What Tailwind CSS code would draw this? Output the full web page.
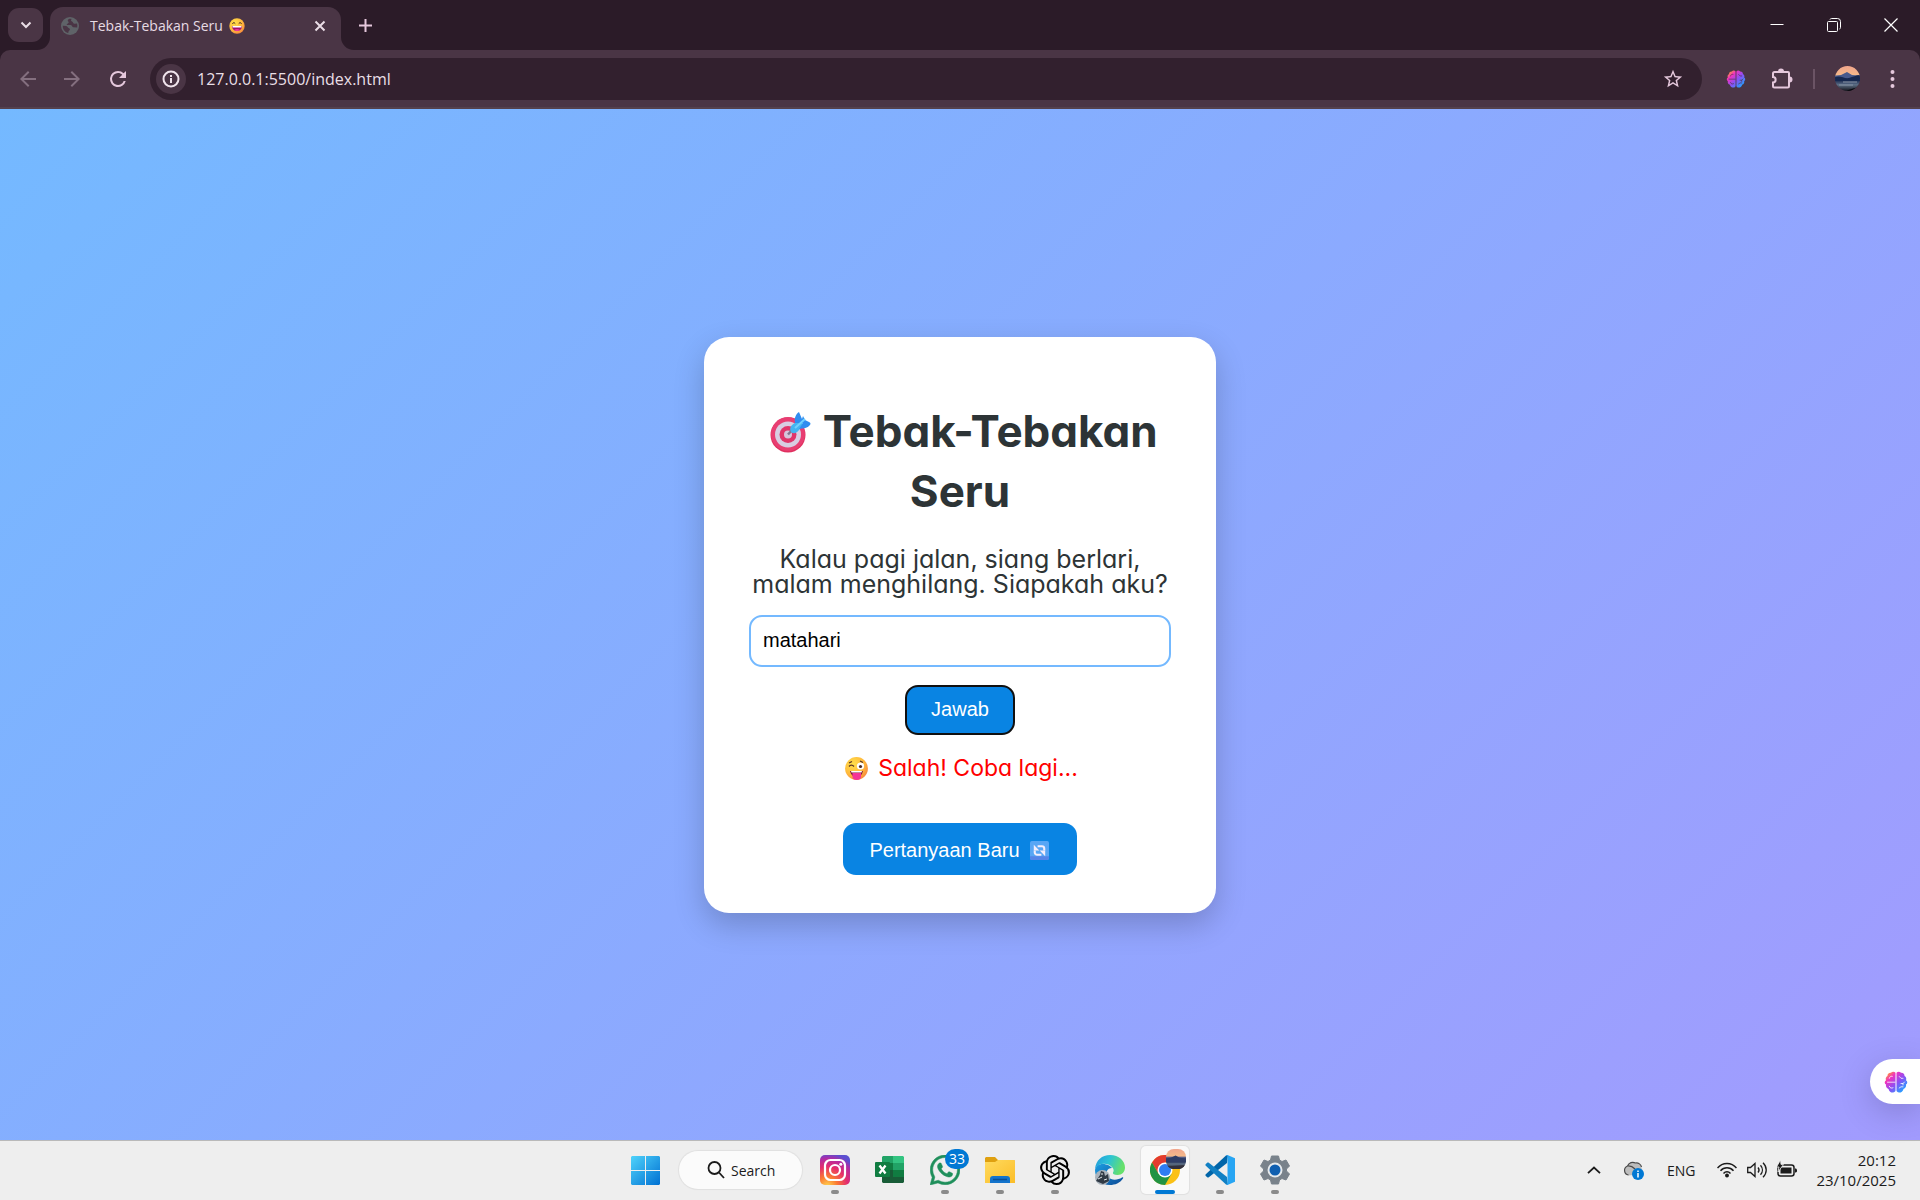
<!DOCTYPE html>
<html lang="id">
<head>
<meta charset="utf-8">
<meta name="viewport" content="width=device-width, initial-scale=1">
<title>Tebak-Tebakan Seru</title>
<script src="https://cdn.jsdelivr.net/npm/@tailwindcss/browser@4"></script>
</head>
<body class="flex min-h-screen flex-col bg-[#eeeeee] font-['Open_Sans','Noto_Sans',sans-serif]">

<!-- Shared gradients and symbols -->
<svg class="absolute size-0" aria-hidden="true">
  <defs>
    <linearGradient id="brainGrad" x1="0" y1="0" x2="1" y2="1">
      <stop offset=".08" stop-color="#ffa02a"/><stop offset=".28" stop-color="#f032c0"/><stop offset=".55" stop-color="#8a50f5"/><stop offset=".85" stop-color="#2b9cff"/>
    </linearGradient>
    <radialGradient id="face" cx=".35" cy=".3" r=".8">
      <stop offset="0" stop-color="#ffe04a"/><stop offset=".6" stop-color="#ffb93c"/><stop offset="1" stop-color="#f5803e"/>
    </radialGradient>
    <linearGradient id="sky" x1="0" y1="0" x2="0" y2="1">
      <stop offset="0" stop-color="#f0a58c"/><stop offset=".35" stop-color="#f5b98a"/><stop offset=".42" stop-color="#56608a"/><stop offset=".58" stop-color="#1d2c52"/><stop offset=".75" stop-color="#5d6f86"/><stop offset="1" stop-color="#12131a"/>
    </linearGradient>
    <symbol id="brain" viewBox="0 0 24 22">
      <path d="M11.500 1.800C10.600.500 8.200.300 7 1.700 4.800 1.500 3.200 3.300 3.500 5 1.800 5.900 1.300 7.800 2 9.200.300 10.200.300 12.700 2 13.600 1.500 15.600 2.700 17.500 4.500 17.900 5 20.400 7 21.600 9 21.500 10.300 21.400 11.500 20.600 11.500 19.500ZM12.500 1.800C13.400.500 15.800.300 17 1.700 19.200 1.500 20.800 3.300 20.500 5 22.200 5.900 22.700 7.800 22 9.200 23.700 10.200 23.700 12.700 22 13.600 22.500 15.600 21.300 17.500 19.500 17.900 19 20.400 17 21.600 15 21.500 13.700 21.400 12.500 20.600 12.500 19.500Z" fill="url(#brainGrad)"/>
      <path d="M3.500 11.200H11M5.300 7.300C5.500 5.700 7 5 8.300 5.300M5.300 15.300C6 17.200 7.600 17.500 9 16.800M15.300 5.500 17 7.300H19M17 12.500H19L20.500 11M19 12.500V14M15.200 17 17 15.800H19" fill="none" stroke="currentColor" stroke-width=".8" stroke-linecap="round"/>
    </symbol>
  </defs>
</svg>

<!-- Browser chrome -->
<header class="bg-[#2b1b28] text-[#e7dbe4]">
  <div class="flex h-[50px] items-end">
    <button type="button" aria-label="Cari tab" class="mb-2 ml-2 grid h-[34px] w-[35px] place-items-center rounded-[11px] bg-[#4a3545]">
      <svg class="size-[12px]" viewBox="0 0 12 12" fill="none" stroke="#eadde6" stroke-width="2"><path d="M1.500 3.500 6 8 10.500 3.500"/></svg>
    </button>
    <div class="relative ml-[7px] flex h-[43px] w-[291px] items-center rounded-t-[13px] bg-[#4a3545] pr-[15px] pb-[6px] pl-[11px]">
      <svg class="absolute bottom-0 -left-[13px] size-[13px]" viewBox="0 0 13 13"><path d="M13 0V13H0A13 13 0 0 0 13 0Z" fill="#4a3545"/></svg>
      <svg class="absolute -right-[13px] bottom-0 size-[13px]" viewBox="0 0 13 13"><path d="M0 0V13H13A13 13 0 0 1 0 0Z" fill="#4a3545"/></svg>
      <svg class="size-[18px]" viewBox="0 0 18 18"><circle cx="9" cy="9" r="9" fill="#5f6368"/><path d="M9.500 1.700C7 1.800 6 3.500 7.500 4.700 8.500 5.600 6.200 6.500 5.600 8H9.500C11 8 11 10 12.200 10.300L16.200 10.500A7.400 7.400 0 0 0 16 6.600L13.500 6.700C12 6.700 12.200 4.800 11 4.500 10 4.200 9.300 2.600 11 2ZM1.700 8.800 5.200 9C7 9.300 6.600 11 8 11.300 9.500 11.700 9 13.200 8.300 13.500 7 14.200 8 15.500 7 16A7.400 7.400 0 0 1 1.700 8.800Z" fill="#4a3545"/></svg>
      <span class="ml-[11px] text-[14px] leading-5 whitespace-nowrap">Tebak-Tebakan Seru</span>
      <svg class="ml-[6px] size-4" viewBox="0 0 16 16"><circle cx="8" cy="8" r="7.700" fill="url(#face)"/><path d="M3.300 5.700 5 4.500 6.300 5.700M9.700 5.700 11 4.500 12.700 5.700" fill="none" stroke="#4a2b25" stroke-width="1"/><path d="M3 8H13C13 14.600 3 14.600 3 8Z" fill="#a3126b"/><path d="M3.500 8H12.500V9.500H3.500Z" fill="#fff"/><path d="M5 12C6.500 10.800 9.500 10.800 11 12 9.500 13.500 6.500 13.500 5 12Z" fill="#f0359a"/></svg>
      <button type="button" aria-label="Tutup tab" class="ml-auto"><svg class="size-3" viewBox="0 0 12 12" stroke="#eadde6" stroke-width="2"><path d="M1.500 1.500 10.500 10.500M10.500 1.500 1.500 10.500"/></svg></button>
    </div>
    <button type="button" aria-label="Tab baru" class="mb-[18px] ml-[18px]"><svg class="size-[13px]" viewBox="0 0 13 13" stroke="#e5c8dc" stroke-width="2"><path d="M6.500 0V13M0 6.500H13"/></svg></button>
    <div class="mr-[22px] mb-[18px] ml-auto flex items-center gap-[43px] text-white">
      <button type="button" aria-label="Kecilkan"><svg class="size-[14px]" viewBox="0 0 14 14" stroke="currentColor"><path d="M.500 6.500H13.500"/></svg></button>
      <button type="button" aria-label="Pulihkan"><svg class="size-[14px]" viewBox="0 0 14 14" fill="none" stroke="currentColor"><rect x=".5" y="3.500" width="10" height="10" rx="1"/><path d="M3 1.500C3.300.800 3.800.500 4.500.500H10.500A3 3 0 0 1 13.500 3.500V9.500C13.500 10.300 13.200 10.800 12.500 11"/></svg></button>
      <button type="button" aria-label="Tutup"><svg class="size-[14px]" viewBox="0 0 14 14" stroke="currentColor" stroke-width="1.200"><path d="M.500.500 13.500 13.500M13.500.500.500 13.500"/></svg></button>
    </div>
  </div>
  <div class="flex h-[59px] items-center rounded-t-[10px] border-b-2 border-[#54414d] bg-[#4a3545] pr-[25px] pl-4">
    <button type="button" aria-label="Kembali"><svg class="size-6" viewBox="0 0 24 24" fill="#846f7f"><path d="M20 11H7.800l5.600-5.600L12 4l-8 8 8 8 1.400-1.400L7.800 13H20z"/></svg></button>
    <button type="button" aria-label="Maju" class="ml-5"><svg class="size-6" viewBox="0 0 24 24" fill="#846f7f"><path d="M4 11h12.200l-5.600-5.600L12 4l8 8-8 8-1.400-1.400 5.600-5.600H4z"/></svg></button>
    <button type="button" aria-label="Muat ulang" class="ml-[22px]"><svg class="size-6" viewBox="0 0 24 24" fill="#e5c8dc"><path d="M17.650 6.350A7.960 7.960 0 0 0 12 4a8 8 0 1 0 7.730 10h-2.080A6 6 0 1 1 12 6c1.660 0 3.140.690 4.220 1.780L13 11h7V4z"/></svg></button>
    <div class="ml-5 flex h-[42px] flex-1 items-center rounded-full bg-[#32202e] pr-[18px] pl-[6px]">
      <button type="button" aria-label="Info situs" class="grid size-[30px] place-items-center rounded-full bg-[#4a3545]"><svg class="size-[18px]" viewBox="0 0 18 18" fill="none" stroke="#f0e4ec" stroke-width="2"><circle cx="9" cy="9" r="7.500"/><path d="M9 8V13M9 5V7"/></svg></button>
      <input type="text" aria-label="Alamat" value="127.0.0.1:5500/index.html" class="ml-[11px] min-w-0 flex-1 bg-transparent text-[16px] leading-6 text-[#e9dfe6] outline-none">
      <button type="button" aria-label="Tandai halaman"><svg class="size-[22px]" viewBox="0 0 24 24" fill="#e5c8dc"><path d="m22 9.240-7.190-.620L12 2 9.190 8.630 2 9.240l5.460 4.730L5.820 21 12 17.270 18.180 21l-1.630-7.030zM12 15.400l-3.760 2.270 1-4.280-3.320-2.880 4.380-.380L12 6.100l1.710 4.040 4.380.380-3.320 2.880 1 4.280z"/></svg></button>
    </div>
    <button type="button" aria-label="Ekstensi otak" class="ml-6 text-[#4a3545]"><svg class="h-[18px] w-5"><use href="#brain"/></svg></button>
    <button type="button" aria-label="Ekstensi" class="ml-[25px]"><svg class="size-[22px]" viewBox="0 0 22 22"><path d="M3.500 4H17a1 1 0 0 1 1 1V18a1.500 1.500 0 0 1-1.500 1.500H3.500A1.500 1.500 0 0 1 2 18V14.500C5.500 14.500 5.500 9 2 9V5.500A1.500 1.500 0 0 1 3.500 4Z" fill="none" stroke="#e5c8dc" stroke-width="2"/><path d="M7 3.500a3 3 0 0 1 6 0ZM18.500 8.500a3 3 0 0 1 0 6Z" fill="#e5c8dc"/></svg></button>
    <span class="ml-5 h-5 w-[2px] bg-[#6b5465]"></span>
    <button type="button" aria-label="Profil" class="ml-5"><svg class="size-[25px]" viewBox="0 0 25 25"><clipPath id="av"><circle cx="12.500" cy="12.500" r="12.500"/></clipPath><g clip-path="url(#av)"><path fill="url(#sky)" d="M0 0H25V25H0Z"/><path d="M0 10 6 9 12 6 17 9 25 10V14H0Z" fill="#475a8c"/><path d="M0 11C6 9 9 13 14 12 18 11 21 9 25 9V15H0Z" fill="#15284f"/><path d="M4 19H18M8 16H22" stroke="#8793a5"/><path d="M12 25C16 22 20 23 25 20V25Z" fill="#090a0f"/></g></svg></button>
    <button type="button" aria-label="Menu" class="ml-[30px]"><svg class="h-[18px] w-[5px]" viewBox="0 0 5 18" fill="#e5c8dc"><circle cx="2.500" cy="2" r="2"/><circle cx="2.500" cy="9" r="2"/><circle cx="2.500" cy="16" r="2"/></svg></button>
  </div>
</header>

<!-- Quiz page -->
<main class="relative flex flex-1 items-center justify-center bg-[linear-gradient(135deg,#74b9ff,#a29bfe)]">
  <section class="flex w-[512px] max-w-full flex-col items-center rounded-[25px] bg-white px-10 pt-16 pb-[38px] text-center text-[#2d3436] shadow-[0_12px_31px_rgba(0,0,0,0.2)]">
    <h1 class="font-['Inter',sans-serif] text-[44px] leading-[60px] font-bold [font-feature-settings:'cv11']"><svg class="inline-block h-[42px] w-[50px] align-[-6px]" viewBox="-4 0 50 42"><circle cx="22" cy="24" r="17.500" fill="#e0305f"/><circle cx="22" cy="23" r="17" fill="#e83e72"/><circle cx="22" cy="23.500" r="13" fill="#d8cde2"/><circle cx="22" cy="23.500" r="8.500" fill="#e0356a"/><circle cx="22" cy="23.500" r="4" fill="#d6c5dc"/><path d="M22 23.500 29 16" stroke="#7f7590" stroke-width="2.500"/><path d="M25 21C23 17 25 14 29 12L34 9 38 14 33 19C30 23 27 23 25 21Z" fill="#42b5f0"/><path d="M29 12C28 7 30 3 33 1L36 8 37 5 39 9 43 11C45 12 45 13 43 15 40 18 36 17 33 18L37 12Z" fill="#2f8df0"/><path d="M29 17 39 8" stroke="#6fd0ff" stroke-width="2"/></svg> Tebak-Tebakan Seru</h1>
    <p class="mt-[26px] font-['Inter',sans-serif] text-[25px] leading-[25px] [font-feature-settings:'cv11']"><label for="jawaban">Kalau pagi jalan, siang berlari,<br>malam menghilang. Siapakah aku?</label></p>
    <input id="jawaban" type="text" value="matahari" class="mt-[18px] h-[52px] w-[422px] max-w-full rounded-[13px] border-2 border-[#74b9ff] px-3 font-['Liberation_Sans',Arial,sans-serif] text-[20px] text-black outline-none">
    <button type="button" class="mt-[18px] h-[50px] w-[110px] rounded-[13px] border-2 border-[#101010] bg-[#0984e3] pb-[2px] font-['Liberation_Sans',Arial,sans-serif] text-[20px] text-white">Jawab</button>
    <p class="mt-[14px] flex h-10 items-center gap-[10px] pl-[3px] font-['Inter',sans-serif] text-[23px] text-[#ff0000] [font-feature-settings:'cv11']"><svg class="size-[23px]" viewBox="0 0 23 23"><circle cx="11.500" cy="11.500" r="11.400" fill="url(#face)"/><circle cx="15.500" cy="9" r="3.600" fill="#fff"/><circle cx="15.500" cy="9.500" r="1.600" fill="#4a2b25"/><path d="M4 9.500C5.500 7.500 7.500 8 9 9.500M4 6 7 4.500M15 4 18 5.500" fill="none" stroke="#5a3524" stroke-width="1.300"/><path d="M5 14H18C17 18 15 20 11.500 20 8 20 6 18 5 14Z" fill="#7a1b3c"/><path d="M6 14H17L16.500 15.500H6.500Z" fill="#fff"/><path d="M7.500 16H16V20C16 24 7.500 24 7.500 20Z" fill="#f53596"/></svg>Salah! Coba lagi...</p>
    <button type="button" class="mt-[34px] flex h-[52px] items-center rounded-[13px] bg-[#0984e3] pt-[3px] pr-7 pl-[26px] font-['Liberation_Sans',Arial,sans-serif] text-[20px] text-white">Pertanyaan Baru<svg class="ml-[10px] size-[19px]" viewBox="0 0 20 20"><rect width="20" height="20" rx="2" fill="#58a6f5"/><path d="M0 16H20V18a2 2 0 0 1-2 2H2a2 2 0 0 1-2-2Z" fill="#5584e8"/><path d="M8 5.500H12.500A2.500 2.500 0 0 1 15 8V10M12 14.500H7.500A2.500 2.500 0 0 1 5 12V10" fill="none" stroke="#f4eefc" stroke-width="2.200"/><path d="M4 4V10H9.800ZM16 16V10H10.200Z" fill="#f4eefc"/></svg></button>
  </section>
  <button type="button" aria-label="Buka asisten" class="absolute right-0 bottom-[36px] flex h-[45px] w-[50px] items-center rounded-l-full bg-white pl-[14px] text-white shadow-[0_8px_30px_rgba(60,50,100,0.25)]"><svg class="h-[22px] w-6"><use href="#brain"/></svg></button>
</main>

<!-- Taskbar -->
<footer class="grid h-[60px] grid-cols-[1fr_auto_1fr] items-center border-t border-[#b9b9b9] bg-[#eeeeee] pb-px text-[#1b1b1b]">
  <div></div>
  <nav aria-label="Bilah tugas" class="flex items-center gap-[7px]">
    <button type="button" aria-label="Mulai" class="grid size-12 place-items-center"><svg class="size-[29px]" viewBox="0 0 29 29"><linearGradient id="win" x1="0" y1="0" x2="1" y2="1"><stop offset="0" stop-color="#4fd3fb"/><stop offset="1" stop-color="#0070d2"/></linearGradient><path fill="url(#win)" d="M1 0H14V14H0V1ZM15 0H28L29 1V14H15ZM0 15H14V29H1L0 28ZM15 15H29V28L28 29H15Z"/></svg></button>
    <button type="button" class="mx-[3px] flex h-[38px] w-[123px] items-center rounded-full bg-[#fbfbfb] pl-7 text-[14px] shadow-[0_0_1px_1px_rgba(0,0,0,0.06)]"><svg class="mr-[6px] size-[18px]" viewBox="0 0 18 18" fill="none" stroke="#1b1b1b" stroke-width="1.800"><circle cx="7.500" cy="7" r="6"/><path d="M12 11.500 17 17"/></svg>Search</button>
    <button type="button" aria-label="Instagram" class="relative -ml-px grid size-12 place-items-center"><svg class="size-[30px]" viewBox="0 0 30 30"><radialGradient id="ig" cx=".25" cy="1.050" r="1.100"><stop offset="0" stop-color="#ffd84f"/><stop offset=".3" stop-color="#fb7a33"/><stop offset=".6" stop-color="#e42d6c"/><stop offset=".85" stop-color="#b02ba5"/><stop offset="1" stop-color="#5b4fd0"/></radialGradient><rect width="30" height="30" rx="5" fill="url(#ig)"/><g fill="none" stroke="#fff" stroke-width="2.200"><rect x="5" y="5" width="20" height="20" rx="5.500"/><circle cx="15" cy="15" r="5"/></g><circle cx="20.800" cy="9.200" r="1.500" fill="#fff"/></svg><span class="absolute bottom-0 h-1 w-2 rounded-full bg-[#8a8a8a]"></span></button>
    <button type="button" aria-label="Excel" class="grid size-12 place-items-center"><svg class="size-[30px]" viewBox="0 0 30 30"><path d="M8 1H19V8H7V2Z" fill="#21a366"/><path d="M18 1H28L29 2V8H18Z" fill="#33c481"/><path d="M7 8H18V15H7Z" fill="#107c41"/><path d="M18 8H29V15H18Z" fill="#21a366"/><path d="M7 15H18V22H7Z" fill="#185c37"/><path d="M18 15H29V22H18Z" fill="#107c41"/><path d="M7 22H29V27L28 28H8L7 27Z" fill="#185c37"/><rect y="7" width="15" height="15" rx="1" fill="#107c41"/><path d="M4.500 10.500 10.500 18.500M10.500 10.500 4.500 18.500" stroke="#fff" stroke-width="2.300"/></svg></button>
    <button type="button" aria-label="WhatsApp" class="relative grid size-12 place-items-center"><svg class="size-[30px]" viewBox="0 0 24 24" fill="#1f8f5b" stroke="#1f8f5b" stroke-width=".4"><path d="M17.472 14.382c-.297-.149-1.758-.867-2.030-.967-.273-.099-.471-.148-.670.150-.197.297-.767.966-.940 1.164-.173.199-.347.223-.644.075-.297-.150-1.255-.463-2.390-1.475-.883-.788-1.480-1.761-1.653-2.059-.173-.297-.018-.458.130-.606.134-.133.298-.347.446-.520.149-.174.198-.298.298-.497.099-.198.050-.371-.025-.520-.075-.149-.669-1.612-.916-2.207-.242-.579-.487-.500-.669-.510-.173-.008-.371-.010-.570-.010-.198 0-.520.074-.792.372-.272.297-1.040 1.016-1.040 2.479 0 1.462 1.065 2.875 1.213 3.074.149.198 2.096 3.200 5.077 4.487.709.306 1.262.489 1.694.625.712.227 1.360.195 1.871.118.571-.085 1.758-.719 2.006-1.413.248-.694.248-1.289.173-1.413-.074-.124-.272-.198-.570-.347m-5.421 7.403h-.004a9.870 9.870 0 0 1-5.031-1.378l-.361-.214-3.741.982.998-3.648-.235-.374a9.860 9.860 0 0 1-1.510-5.260c.001-5.450 4.436-9.884 9.888-9.884 2.640 0 5.122 1.030 6.988 2.898a9.825 9.825 0 0 1 2.893 6.994c-.003 5.450-4.437 9.884-9.885 9.884m8.413-18.297A11.815 11.815 0 0 0 12.050 0C5.495 0 .160 5.335.157 11.892c0 2.096.547 4.142 1.588 5.945L.057 24l6.305-1.654a11.882 11.882 0 0 0 5.683 1.448h.005c6.554 0 11.890-5.335 11.893-11.893a11.821 11.821 0 0 0-3.480-8.413z"/></svg><span class="absolute top-[3px] right-0 h-5 rounded-full bg-[#0078d4] px-1 text-[14px] leading-5 text-white">33</span><span class="absolute bottom-0 h-1 w-2 rounded-full bg-[#8a8a8a]"></span></button>
    <button type="button" aria-label="File Explorer" class="relative grid size-12 place-items-center"><svg class="size-[30px]" viewBox="0 0 30 30"><linearGradient id="fo" x1="0" y1="0" x2="1" y2="1"><stop offset="0" stop-color="#ffda5e"/><stop offset="1" stop-color="#fbbd28"/></linearGradient><path d="M0 3 1 2H10L13 5H29L30 6V12H0Z" fill="#dfa010"/><path d="M0 7H10L13 5H29L30 6V28H0Z" fill="url(#fo)"/><path d="M5 28V24A3 3 0 0 1 8 21H22A3 3 0 0 1 25 24V28Z" fill="#1474cc"/><path d="M8 24.500H22" stroke="#0b4f94" stroke-width="1.500"/></svg><span class="absolute bottom-0 h-1 w-2 rounded-full bg-[#8a8a8a]"></span></button>
    <button type="button" aria-label="ChatGPT" class="relative grid size-12 place-items-center"><svg class="size-[30px]" viewBox="0 0 24 24"><path d="M22.282 9.821a5.985 5.985 0 0 0-.516-4.911 6.046 6.046 0 0 0-6.510-2.900A6.065 6.065 0 0 0 4.981 4.182a5.985 5.985 0 0 0-3.998 2.900 6.046 6.046 0 0 0 .743 7.097 5.980 5.980 0 0 0 .511 4.911 6.051 6.051 0 0 0 6.515 2.900A5.985 5.985 0 0 0 13.260 24a6.056 6.056 0 0 0 5.772-4.206 5.989 5.989 0 0 0 3.998-2.900 6.056 6.056 0 0 0-.748-7.073zm-9.022 12.608a4.476 4.476 0 0 1-2.876-1.041l.142-.080 4.778-2.758a.795.795 0 0 0 .393-.681v-6.737l2.020 1.169a.071.071 0 0 1 .038.052v5.583a4.504 4.504 0 0 1-4.495 4.494zm-9.661-4.125a4.471 4.471 0 0 1-.535-3.014l.142.085 4.783 2.758a.771.771 0 0 0 .781 0l5.843-3.369v2.332a.080.080 0 0 1-.033.062L9.740 19.950a4.499 4.499 0 0 1-6.141-1.646zM2.341 7.896a4.485 4.485 0 0 1 2.366-1.973V11.600a.766.766 0 0 0 .388.677l5.814 3.354-2.020 1.169a.076.076 0 0 1-.071 0l-4.830-2.787A4.504 4.504 0 0 1 2.341 7.872zm16.596 3.856L13.104 8.364 15.119 7.200a.076.076 0 0 1 .071 0l4.830 2.791a4.494 4.494 0 0 1-.677 8.104v-5.677a.790.790 0 0 0-.407-.667zm2.011-3.023l-.142-.085-4.774-2.782a.776.776 0 0 0-.785 0L9.409 9.230V6.897a.066.066 0 0 1 .028-.062l4.830-2.787a4.499 4.499 0 0 1 6.680 4.660zM8.307 12.863l-2.020-1.164a.080.080 0 0 1-.038-.057V6.074a4.499 4.499 0 0 1 7.376-3.454l-.142.081L8.704 5.459a.795.795 0 0 0-.393.681zm1.098-2.365l2.602-1.500 2.607 1.500v2.999l-2.597 1.500-2.607-1.500Z"/></svg><span class="absolute bottom-0 h-1 w-2 rounded-full bg-[#8a8a8a]"></span></button>
    <button type="button" aria-label="Edge" class="grid size-12 place-items-center"><svg class="size-[30px]" viewBox="0 0 30 30"><linearGradient id="e1" x1="0" y1="0" x2="1" y2=".3"><stop offset="0" stop-color="#2098dd"/><stop offset=".5" stop-color="#2cc3d5"/><stop offset="1" stop-color="#66e06b"/></linearGradient><linearGradient id="e2" x1="0" y1="0" x2="1" y2="1"><stop offset="0" stop-color="#1b9de2"/><stop offset="1" stop-color="#0c4a96"/></linearGradient><path d="M0 14C1 5 7 0 15 0 24 0 30 6 30 12.500 30 17 27 20 22.500 20 19 20 17.500 18.800 18 17.500 19 16 19 14 17 12 12 7 3 8 0 14Z" fill="url(#e1)"/><path d="M0 15C1 10 6 8 11 9.500 14 10 16 11.500 17 13 12 13 10 18 13 22 17 26 23 25 27 22.500 28 22 28.500 22.500 28 23.500 25 28 20 30 15 30 6 30 0 23 0 15Z" fill="url(#e2)"/><circle cx="7.500" cy="22.500" r="7.500" fill="#aab3bc"/><path d="M1 26 5 20 6 16 9 17 10 21 13 19 14 26 8 29Z" fill="#303a45"/><path d="M3 24 7 22M9 25 12 24M7 18V20" stroke="#e1e6ea"/></svg></button>
    <button type="button" aria-label="Chrome" class="relative grid size-12 place-items-center rounded-[5px] bg-[#f9f9f9] shadow-[0_0_1px_1px_rgba(0,0,0,0.06)]"><svg class="size-[30px]" viewBox="0 0 30 30"><circle cx="15" cy="15" r="15" fill="#fbc116"/><path d="M2 7.500A15 15 0 0 1 28 7.500H15L8.500 18.750Z" fill="#e33b2e"/><path d="M2 7.500A15 15 0 0 0 15 30L21.500 18.750 8.500 18.750Z" fill="#229342"/><circle cx="15" cy="15" r="7.500" fill="#fff"/><circle cx="15" cy="15" r="6" fill="#2f7df2"/></svg><svg class="absolute top-[3px] right-[3px] size-5" viewBox="0 0 25 25"><clipPath id="av2"><rect width="25" height="25" rx="10"/></clipPath><g clip-path="url(#av2)"><path fill="url(#sky)" d="M0 0H25V25H0Z"/><path d="M0 12 6 11 12 8 17 11 25 12V17H0Z" fill="#2f3d66"/><path d="M0 22 25 20V25H0Z" fill="#33303a"/></g></svg><span class="absolute bottom-0 h-1 w-5 rounded-full bg-[#0078d4]"></span></button>
    <button type="button" aria-label="Visual Studio Code" class="relative grid size-12 place-items-center"><svg class="size-[30px]" viewBox="0 0 30 30"><path d="M22 8 3.500 22.500 2.500 22.500.500 20.800V19.500L21 .500 23 0Z" fill="#0065a9"/><path d="M22 22 3.500 7.500H2.500L.500 9.200V10.500L21 29.500 23 30Z" fill="#1180c4"/><path d="M22.500 0 30 3.300V26.700L22.500 30C21.700 30 21 29.500 21 29.500 22 29.500 22.500 29 22.500 28V2C22.500 1 22 .500 21 .500 21 .500 21.700 0 22.500 0Z" fill="#27a5f3"/></svg><span class="absolute bottom-0 h-1 w-2 rounded-full bg-[#8a8a8a]"></span></button>
    <button type="button" aria-label="Pengaturan" class="relative grid size-12 place-items-center"><svg class="size-[30px]" viewBox="0 0 30 30"><path d="M11.500 1H18.500L19.500 5 22 6.500 26 5 29.500 11 26.500 14V16L29.500 19 26 25 22 23.500 19.500 25 18.500 29H11.500L10.500 25 8 23.500 4 25 .500 19 3.500 16V14L.500 11 4 5 8 6.500 10.500 5Z" fill="#79828b" stroke="#79828b" stroke-linejoin="round"/><circle cx="15" cy="15" r="7.500" fill="#e6eaed"/><circle cx="15" cy="15" r="5.500" fill="#0f5fb0"/></svg><span class="absolute bottom-0 h-1 w-2 rounded-full bg-[#8a8a8a]"></span></button>
  </nav>
  <div class="flex items-center justify-end pr-6 text-[14px]">
    <button type="button" aria-label="Ikon tersembunyi"><svg class="h-2 w-[14px]" viewBox="0 0 14 8" fill="none" stroke="#1b1b1b" stroke-width="1.800"><path d="M1 7.200 7 1.500 13 7.200"/></svg></button>
    <svg class="ml-[22px] h-5 w-[22px]" viewBox="0 0 22 20" role="img" aria-label="OneDrive"><path d="M5.500 15.500A5 5 0 0 1 4.500 6C6 2.500 10 1.500 13 3.200 16 3 18.500 5.500 18.800 8.500L18 14Z" fill="#bdbdbd"/><path d="M5.500 15A4.700 4.700 0 0 1 4.500 6C6 2.500 9.500 1.500 12.500 3 15.500 2.500 18 4.500 18.500 7M4.500 6C8 5.500 10 7 12 9" fill="none" stroke="#4a4a4a" stroke-width="1.200"/><circle cx="15" cy="14" r="6" fill="#0078d4"/><path d="M15 10.500V12M15 13V17.500" stroke="#fff" stroke-width="1.500"/></svg>
    <button type="button" class="ml-[22px]">ENG</button>
    <svg class="ml-[22px] size-5" viewBox="0 0 20 20" fill="none" stroke="#1b1b1b" stroke-width="1.500" role="img" aria-label="Wi-Fi"><path d="M.500 8C5.500 2 14.500 2 19.500 8M3.500 10.800C7 6.800 13 6.800 16.500 10.800M6.500 13.500C8.500 11.300 11.500 11.300 13.500 13.500"/><circle cx="10" cy="15.500" r="1.200" fill="#1b1b1b"/></svg>
    <svg class="ml-[10px] size-5" viewBox="0 0 20 20" fill="none" stroke="#1b1b1b" stroke-width="1.300" role="img" aria-label="Volume"><path d="M.700 7.500H3.500L8 3.500V16.500L3.500 12.500H.700ZM11 7.500C12.300 9 12.300 11 11 12.500M13.500 5.200C16 8 16 12 13.500 14.800M16 2.800C20.300 7 20.300 13 16 17.200"/></svg>
    <svg class="ml-[10px] size-5" viewBox="0 0 20 20" role="img" aria-label="Baterai"><rect x="1" y="5" width="16" height="11" rx="2.500" fill="none" stroke="#1b1b1b" stroke-width="1.500"/><rect x="3.500" y="7.500" width="11" height="6" fill="#1b1b1b"/><path d="M18 8.500H19L20 9.500V11.500L19 12.500H18Z" fill="#1b1b1b"/><path d="M3.500 0-.500 7H2L1 12 6.500 4.500H4Z" fill="#1b1b1b" stroke="#eee" stroke-width=".8"/></svg>
    <time datetime="2025-10-23T20:12" class="ml-[19px] text-right text-[15px] leading-5">20:12<br>23/10/2025</time>
  </div>
</footer>
</body>
</html>
